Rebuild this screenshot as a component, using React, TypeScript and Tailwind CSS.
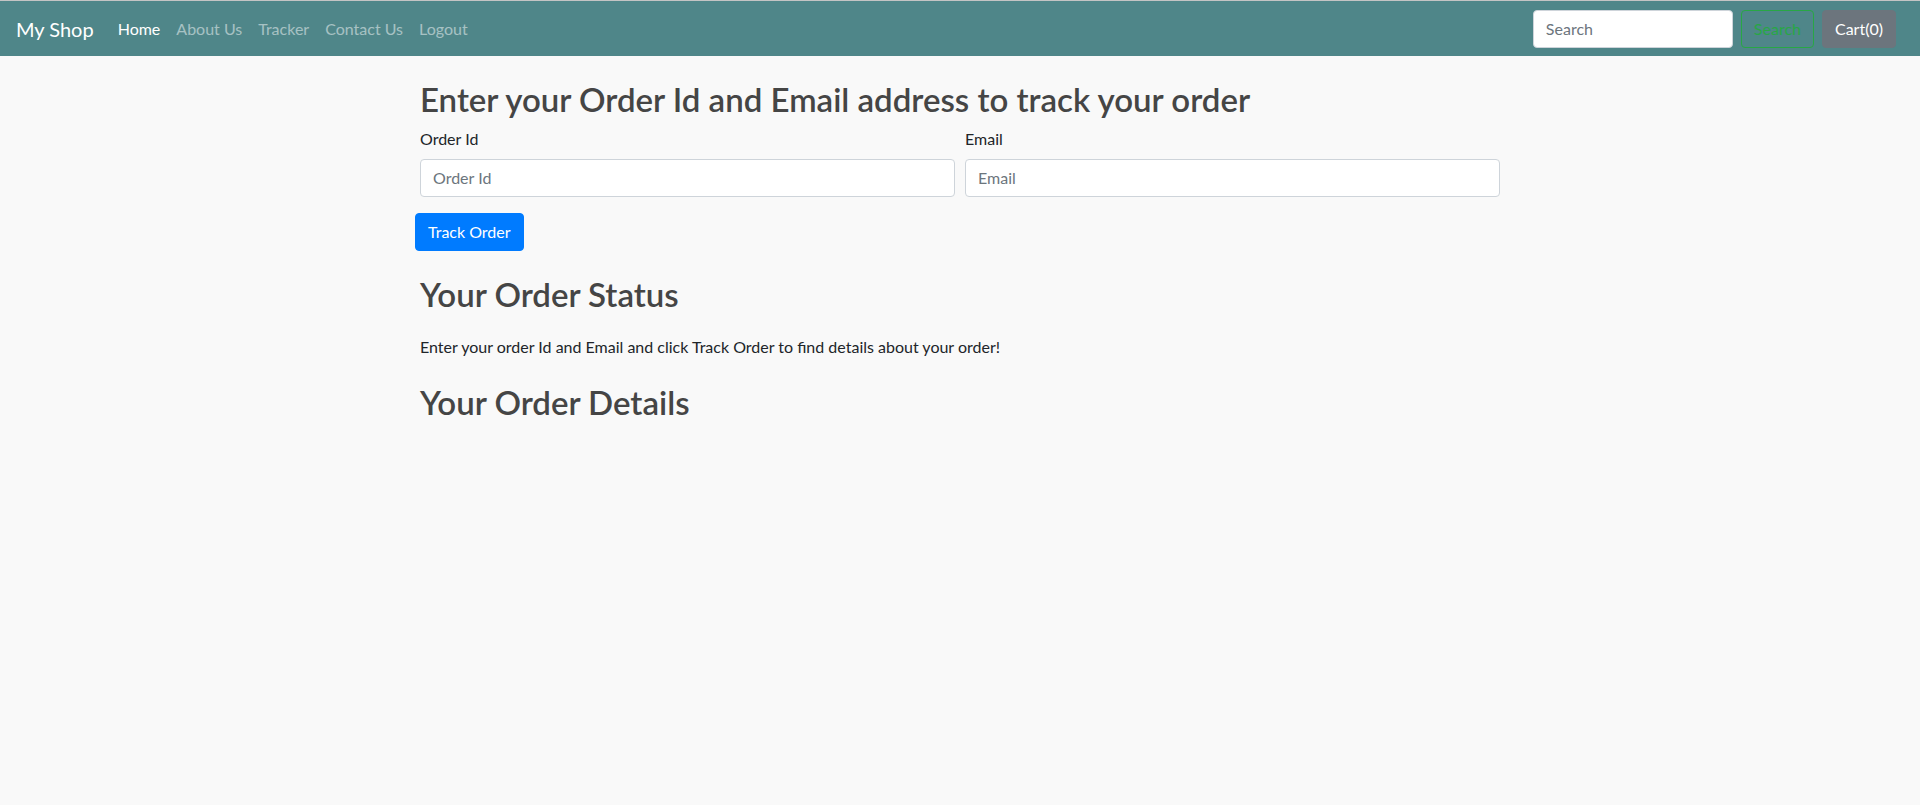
const navLinks = [
  { label: "Home", active: true },
  { label: "About Us", active: false },
  { label: "Tracker", active: false },
  { label: "Contact Us", active: false },
  { label: "Logout", active: false },
];

const Navbar = () => {
  return (
    <nav className="flex h-[56px] items-center border-t border-[#c4c4c4] bg-[#4f8689] px-4">
      <a href="#" className="mr-4 text-[20px] leading-[30px] text-white">
        My Shop
      </a>
      <ul className="flex flex-1 items-center">
        {navLinks.map((link) => (
          <li key={link.label}>
            <a
              href="#"
              className={
                link.active
                  ? "px-2 py-2 text-white"
                  : "px-2 py-2 text-white/50"
              }
            >
              {link.label}
            </a>
          </li>
        ))}
      </ul>
      <form className="flex items-center">
        <input
          type="search"
          placeholder="Search"
          className="mr-2 h-[38px] w-[200px] rounded border border-[#ced4da] bg-white px-3 text-base text-[#495057] placeholder:text-[#6c757d] outline-none"
        />
        <button
          type="button"
          className="h-[38px] rounded border border-[#28a745] px-3 text-base text-[#28a745]"
        >
          Search
        </button>
      </form>
      <button
        type="button"
        className="mx-2 h-[38px] rounded border border-[#6c757d] bg-[#6c757d] px-3 text-base text-white"
      >
        Cart(0)
      </button>
    </nav>
  );
};

const App = () => {
  return (
    <div
      className="min-h-[805px] bg-[#f9f9f9] text-base leading-6 text-[#212529]"
      style={{ fontFamily: "Lato, 'Liberation Sans', sans-serif" }}
    >
      <Navbar />
      <div className="mx-auto w-[1140px] px-[30px]">
        <div className="mt-6">
          <h2 className="mb-[7px] text-[33px] font-semibold leading-[1.2] text-[#454545]">
            Enter your Order Id and Email address to track your order
          </h2>
          <form>
            <div className="-mx-[5px] flex">
              <div className="mb-4 flex flex-1 flex-col px-[5px]">
                <label htmlFor="orderId" className="mb-2">
                  Order Id
                </label>
                <input
                  id="orderId"
                  placeholder="Order Id"
                  className="h-[38px] rounded border border-[#ced4da] bg-white px-3 text-[#495057] placeholder:text-[#6c757d] outline-none"
                />
              </div>
              <div className="mb-4 flex flex-1 flex-col px-[5px]">
                <label htmlFor="email" className="mb-2">
                  Email
                </label>
                <input
                  id="email"
                  type="email"
                  placeholder="Email"
                  className="h-[38px] rounded border border-[#ced4da] bg-white px-3 text-[#495057] placeholder:text-[#6c757d] outline-none"
                />
              </div>
            </div>
            <button
              type="button"
              className="-ml-[5px] h-[38px] rounded border border-[#007bff] bg-[#007bff] px-3 text-white"
            >
              Track Order
            </button>
          </form>
        </div>

        <div className="mt-6">
          <h2 className="mb-2 text-[33px] font-semibold leading-[1.2] text-[#454545]">
            Your Order Status
          </h2>
          <p className="mt-[21px]">
            Enter your order Id and Email and click Track Order to find details about your order!
          </p>
        </div>

        <div className="mt-6">
          <h2 className="mb-2 text-[33px] font-semibold leading-[1.2] text-[#454545]">
            Your Order Details
          </h2>
        </div>
      </div>
    </div>
  );
};

export default App;
